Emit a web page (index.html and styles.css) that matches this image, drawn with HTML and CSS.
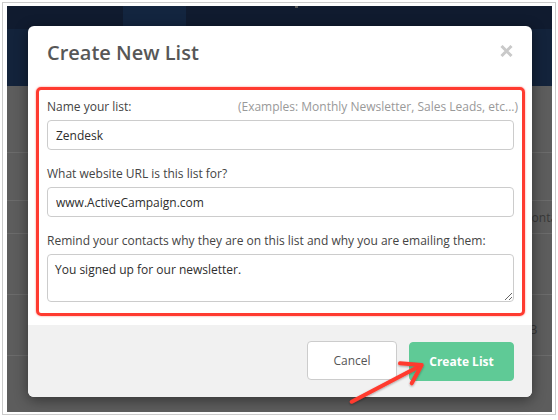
FILE: index.html
```html
<!DOCTYPE html>
<html lang="en">
<head>
<meta charset="utf-8">
<title>Create New List</title>
<link rel="stylesheet" href="styles.css">
</head>
<body>
<div class="frame">
  <div class="app">
    <div class="topbar"><div class="topbar-block"></div><span class="topbar-mark"></span></div>
    <div class="subbar"></div>
    <div class="rows">
      <div class="row r1"></div>
      <div class="row r2"></div>
      <div class="row r3"><span class="cell-text">Conta</span></div>
      <div class="row r4"></div>
      <div class="row r5"><span class="cell-num">3</span></div>
      <div class="row r6"></div>
    </div>
  </div>
</div>

<div class="modal">
  <div class="modal-header">
    <h1 class="modal-title">Create New List</h1>
    <svg class="close" width="13" height="12" viewBox="0 0 13 12" aria-label="Close">
      <path d="M1.5 1 L11.5 11 M11.5 1 L1.5 11" stroke="#c9c9c9" stroke-width="3" stroke-linecap="butt"/>
    </svg>
  </div>
  <div class="annot">
    <div class="label-row">
      <span class="label">Name your list:</span>
      <span class="hint">(Examples: Monthly Newsletter, Sales Leads, etc...)</span>
    </div>
    <input class="field" type="text" value="Zendesk">
    <div class="label-row">
      <span class="label">What website URL is this list for?</span>
    </div>
    <input class="field" type="text" value="www.ActiveCampaign.com">
    <div class="label-row">
      <span class="label">Remind your contacts why they are on this list and why you are emailing them:</span>
    </div>
    <textarea class="field area">You signed up for our newsletter.</textarea>
  </div>
  <div class="modal-footer">
    <button class="btn btn-cancel">Cancel</button>
    <button class="btn btn-create">Create List</button>
  </div>
</div>

<svg class="arrow" width="100" height="60" viewBox="0 0 100 60">
  <g fill="none" stroke="#ff3a2f" stroke-width="4" stroke-linecap="round" stroke-linejoin="round" filter="url(#sh)">
    <path d="M11.7 46.7 L81.2 10.3"/>
    <path d="M60 8.3 L81.7 10 L71.7 28.3"/>
  </g>
  <defs>
    <filter id="sh" x="-20%" y="-20%" width="140%" height="140%">
      <feDropShadow dx="0" dy="1" stdDeviation="1" flood-color="#000" flood-opacity="0.35"/>
    </filter>
  </defs>
</svg>
</body>
</html>
```

FILE: styles.css
```css
* { box-sizing: border-box; }

html, body {
  margin: 0;
  padding: 0;
  background: #ffffff;
  font-family: "Open Sans", "Liberation Sans", sans-serif;
}

body {
  position: relative;
  width: 558px;
  height: 420px;
  overflow: hidden;
}

.frame {
  margin: 2px 0 0 2px;
  width: 554px;
  height: 413px;
  border: 1px solid #cbcbcb;
  padding: 3px 3px 2px 4px;
}

.app {
  width: 545px;
  height: 406px;
  overflow: hidden;
  background: #5d5d5d;
  display: flex;
  flex-direction: column;
}

.topbar {
  height: 23px;
  background: #101b2f;
  display: flex;
  align-items: flex-start;
  flex-shrink: 0;
}

.topbar-block {
  margin-left: 116px;
  width: 63px;
  height: 23px;
  background: #13253f;
}

.topbar-mark {
  margin-left: 109px;
  width: 3px;
  height: 2px;
  background: #5a5a5a;
}

.subbar {
  height: 57px;
  background: #13233b;
  flex-shrink: 0;
}

.rows {
  flex: 1;
  display: flex;
  flex-direction: column;
}

.row {
  border-bottom: 1px solid #6b6b6b;
  flex-shrink: 0;
}

.r1 { height: 67px; }
.r2 { height: 48px; }
.r3 { height: 33px; padding-left: 517px; display: flex; align-items: center; }
.r4 { height: 61px; }
.r5 { height: 61px; padding-left: 523px; padding-top: 22px; }
.r6 { flex: 1; border-bottom: none; }

.cell-text, .cell-num {
  font-size: 12px;
  line-height: 17px;
  color: #383838;
  white-space: nowrap;
}

.cell-num { font-size: 13px; }

/* Modal */
.modal {
  position: absolute;
  left: 28px;
  top: 26px;
  width: 504px;
  height: 371px;
  background: #ffffff;
  border-radius: 6px;
  box-shadow: 0 3px 14px rgba(0, 0, 0, 0.45);
  overflow: hidden;
  display: flex;
  flex-direction: column;
}

.modal-header {
  padding: 13px 19px 0 19px;
  display: flex;
  justify-content: space-between;
  align-items: flex-start;
}

.modal-title {
  margin: 0;
  font-size: 20px;
  line-height: 27px;
  font-weight: 600;
  color: #575757;
}

.close {
  margin-top: 6px;
  display: block;
}

.annot {
  margin: 21px 7px 0 8px;
  border: 3px solid #ff3b30;
  border-radius: 5px;
  box-shadow: 0 0 2px rgba(255, 40, 30, 0.6);
  padding: 8px 8px 11px 8px;
}

.label-row {
  display: flex;
  justify-content: space-between;
  height: 17px;
  line-height: 17px;
  margin-bottom: 5px;
  font-size: 12px;
  white-space: nowrap;
}

.label { color: #444444; }

.hint {
  color: #999999;
  margin-right: -4px;
}

.field {
  display: block;
  width: 100%;
  height: 30px;
  margin: 0 0 15px 0;
  border: 1px solid #cccccc;
  border-radius: 4px;
  padding: 0 8px;
  font-family: "Open Sans", "Liberation Sans", sans-serif;
  font-size: 12px;
  color: #2e2e2e;
  background: #ffffff;
  outline: none;
}

.area {
  height: 48px;
  margin-bottom: 0;
  padding: 6px 7px;
  line-height: 17px;
  resize: vertical;
}

.modal-footer {
  margin-top: auto;
  height: 72px;
  background: #f1f1f1;
  display: flex;
  justify-content: flex-end;
  align-items: flex-start;
  gap: 12px;
  padding: 16px 18px 0 0;
}

.btn {
  font-family: "Open Sans", "Liberation Sans", sans-serif;
  font-size: 12px;
  height: 39px;
  border-radius: 4px;
  cursor: pointer;
}

.btn-cancel {
  width: 90px;
  background: #ffffff;
  border: 1px solid #cccccc;
  color: #555555;
}

.btn-create {
  width: 105px;
  margin-top: 1px;
  background: #5fca96;
  border: 1px solid #5fca96;
  color: #ffffff;
  font-weight: 700;
}

.arrow {
  position: absolute;
  left: 340px;
  top: 355px;
}
```
